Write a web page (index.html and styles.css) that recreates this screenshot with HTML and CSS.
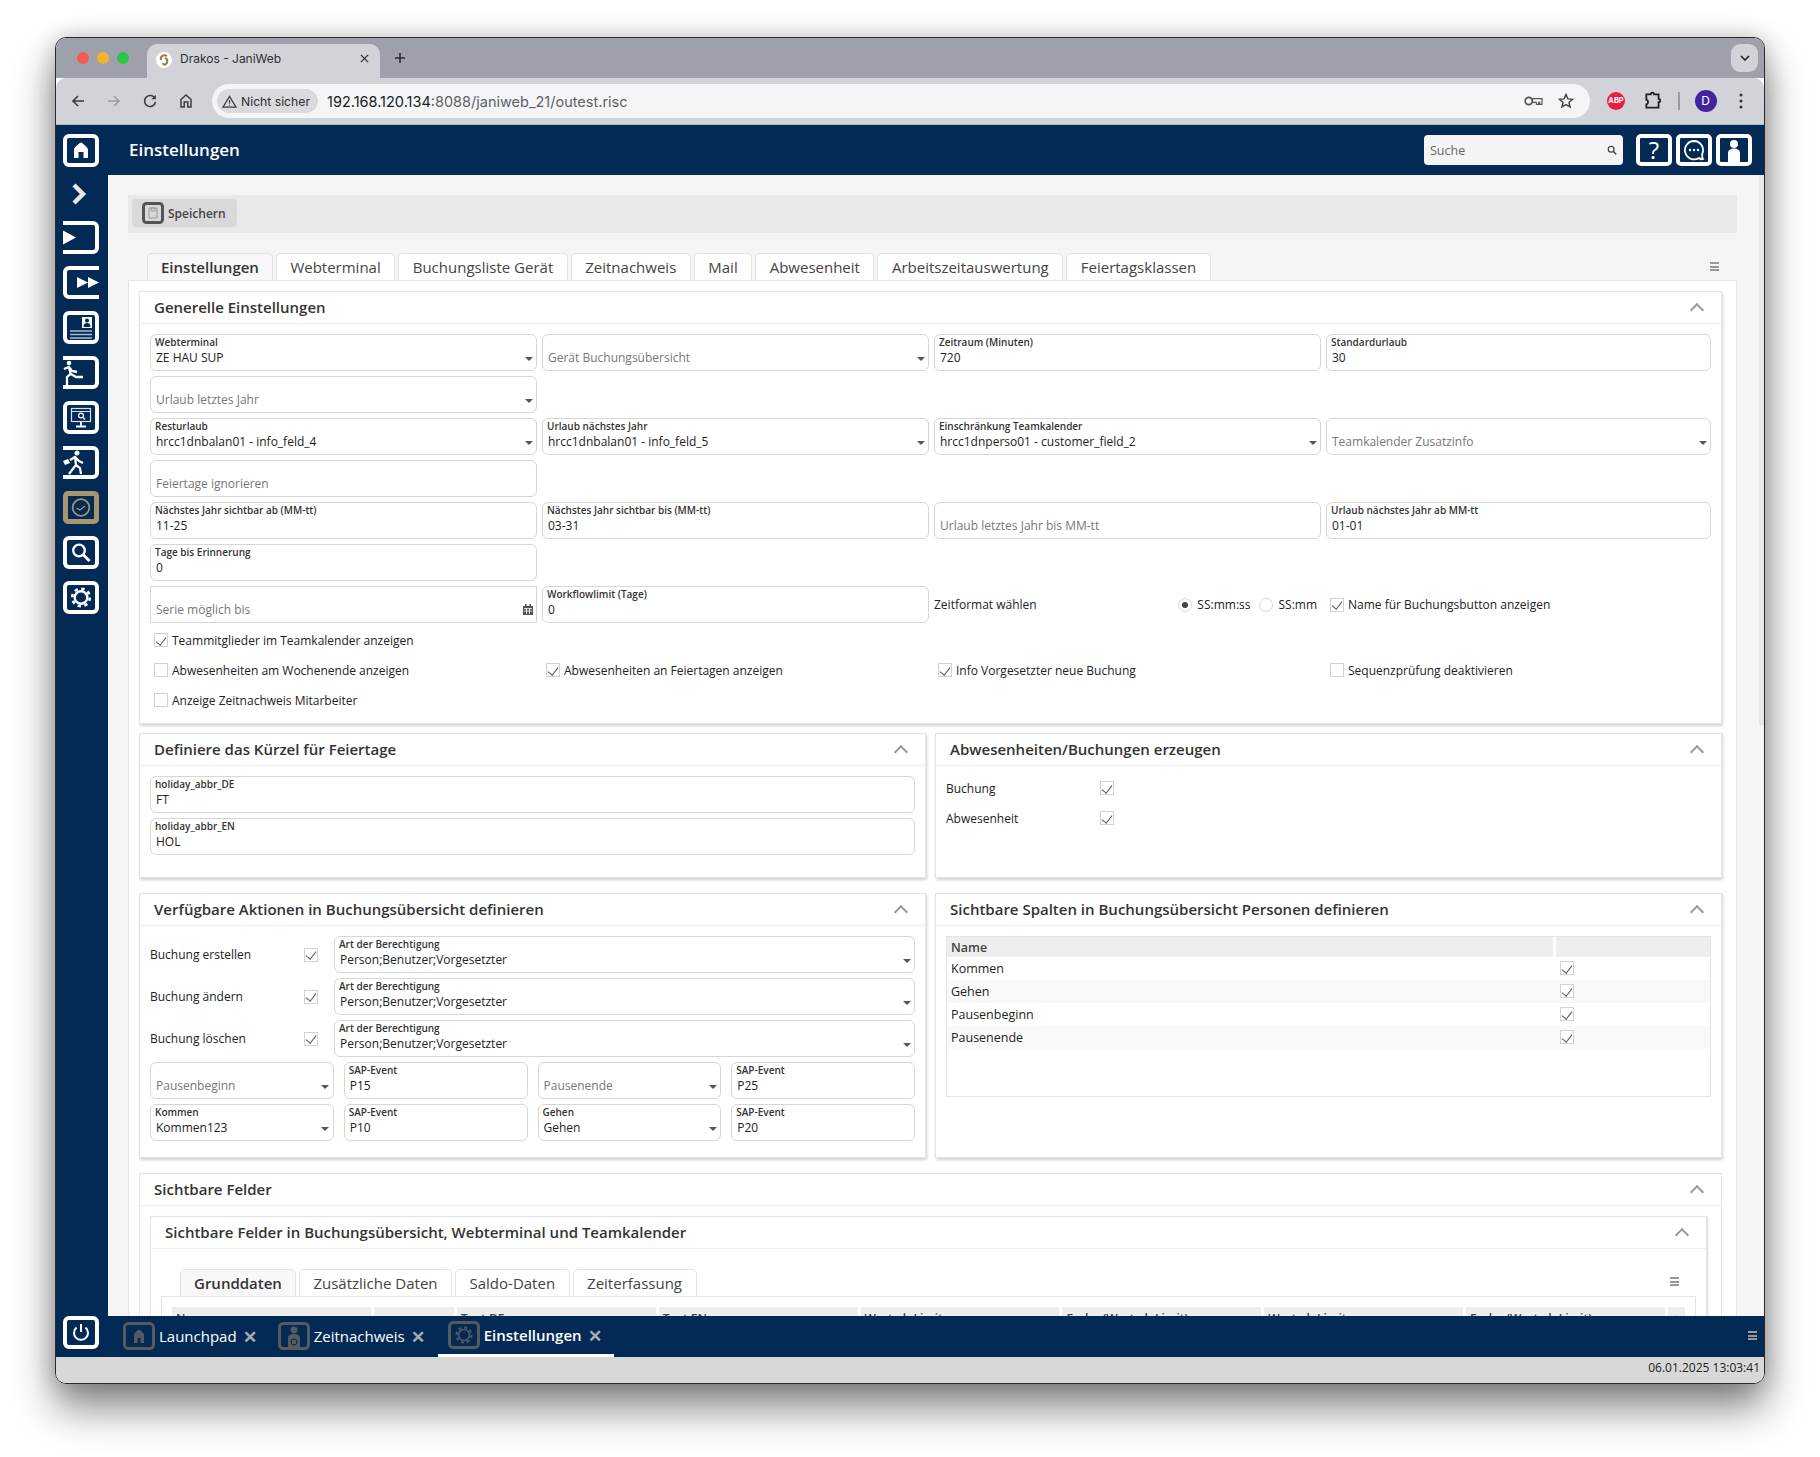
FILE: index.html
```html
<!DOCTYPE html>
<html lang="de">

<head>
  <meta charset="UTF-8">
  <title>Drakos - JaniWeb</title>
  <link rel="stylesheet" href="styles.css">
</head>

<body>
  <div class="window">

    <!-- browser chrome -->
    <div class="tabstrip">
      <span class="light red"></span><span class="light yellow"></span><span class="light green"></span>
      <div class="browser-tab">
        <svg class="favicon" viewBox="0 0 16 16"><circle cx="8" cy="8" r="8" fill="#fff"/><path d="M11 4C7 2 4 5 5 8M9 6c3 1 3 4 1 6-1 1-3 1-3-1" fill="none" stroke="#9a7a4c" stroke-width="2"/></svg>
        <span class="browser-tab-title">Drakos - JaniWeb</span>
        <svg class="browser-tab-close" viewBox="0 0 10 10"><path d="M1 1l8 8M9 1l-8 8" stroke="#333" stroke-width="1.4"/></svg>
      </div>
      <svg class="new-tab" viewBox="0 0 12 12"><path d="M6 1v10M1 6h10" stroke="#2b2b2b" stroke-width="1.6"/></svg>
      <div class="tab-dropdown"><svg viewBox="0 0 10 6"><path d="M1 1l4 4 4-4" fill="none" stroke="#222" stroke-width="1.6"/></svg></div>
    </div>

    <div class="toolbar">
      <span class="nav-btn"><svg viewBox="0 0 16 16"><path d="M14 8H3M8 3L3 8l5 5" fill="none" stroke="#3b3d42" stroke-width="1.6"/></svg></span>
      <span class="nav-btn"><svg viewBox="0 0 16 16"><path d="M2 8h11M8 3l5 5-5 5" fill="none" stroke="#9a9ca3" stroke-width="1.6"/></svg></span>
      <span class="nav-btn"><svg viewBox="0 0 16 16"><path d="M13 5.500A5.500 5.500 0 1 0 13.500 9" fill="none" stroke="#3b3d42" stroke-width="1.6"/><path d="M13.800 1.800v4.400H9.400z" fill="#3b3d42"/></svg></span>
      <span class="nav-btn"><svg viewBox="0 0 16 16"><path d="M3 14V6.500L8 2l5 4.500V14h-3.200V9H6.200v5z" fill="none" stroke="#3b3d42" stroke-width="1.500"/></svg></span>
      <div class="url-pill">
        <span class="insecure">
          <svg viewBox="0 0 16 14"><path d="M8 1.500L15 13H1z" fill="none" stroke="#3b3d42" stroke-width="1.300"/><path d="M8 5.500v4M8 10.500v1.200" stroke="#3b3d42" stroke-width="1.200"/></svg>
          Nicht sicher
        </span>
        <span class="url"><span class="url-host">192.168.120.134</span>:8088/janiweb_21/outest.risc</span>
        <svg class="key-icon" viewBox="0 0 20 12"><circle cx="5" cy="6" r="3.800" fill="none" stroke="#55575c" stroke-width="1.800"/><path d="M9 3.500h10v6h-2.500V7.500h-1v2h-2.500v-2H9z" fill="none" stroke="#55575c" stroke-width="1.200"/></svg>
        <svg class="star-icon" viewBox="0 0 16 16"><path d="M8 1.500l1.900 4.400 4.700.4-3.600 3.100 1.100 4.600L8 11.600 3.900 14l1.100-4.600-3.600-3.100 4.700-.4z" fill="none" stroke="#46484d" stroke-width="1.500"/></svg>
      </div>
      <span class="ext-btn"><span class="abp">ABP</span></span>
      <span class="ext-btn"><svg class="puzzle" viewBox="0 0 18 18"><path d="M3 3h4c0-2 3-2 3 0h4v4c2 0 2 3 0 3v5H3v-3c2 0 2-4 0-4z" fill="none" stroke="#202124" stroke-width="1.600"/></svg></span>
      <span class="toolbar-divider"></span>
      <span class="avatar">D</span>
      <span class="ext-btn"><svg viewBox="0 0 4 16"><circle cx="2" cy="2" r="1.500" fill="#333"/><circle cx="2" cy="8" r="1.500" fill="#333"/><circle cx="2" cy="14" r="1.500" fill="#333"/></svg></span>
    </div>

    <div class="app">
      <!-- left icon bar -->
      <nav class="sidebar">
        <svg class="side-btn" viewBox="0 0 36 33"><rect x="2" y="2" width="32" height="29" rx="4" fill="none" stroke="#fff" stroke-width="4"/><path d="M18 8.500c1 0 7 5 7 7V24h-4.500v-6h-5v6H11v-8.500c0-2 6-7 7-7z" fill="#fff"/></svg>
        <svg class="side-chevron" viewBox="0 0 16 30"><path d="M3 6l9 9-9 9" fill="none" stroke="#e6e6e6" stroke-width="4.500"/></svg>
        <svg class="side-btn" viewBox="0 0 36 33"><path d="M0 2h30a4 4 0 0 1 4 4v21a4 4 0 0 1-4 4H0" fill="none" stroke="#fff" stroke-width="4"/><path d="M0 9.500l13 7-13 7z" fill="#fff"/></svg>
        <svg class="side-btn" viewBox="0 0 36 33"><path d="M36 2H6a4 4 0 0 0-4 4v21a4 4 0 0 0 4 4h30" fill="none" stroke="#fff" stroke-width="4"/><path d="M14 11l11 5.500L14 22zM25 11l11 5.500L25 22z" fill="#fff"/></svg>
        <svg class="side-btn" viewBox="0 0 36 33"><rect x="2" y="2" width="32" height="29" rx="4" fill="none" stroke="#fff" stroke-width="4"/><path d="M19 6h10v11H19z" fill="#fff"/><circle cx="24" cy="9.500" r="2" fill="#032a54"/><path d="M20.500 16c0-3 1.500-4 3.500-4s3.500 1 3.500 4z" fill="#032a54"/><path d="M7 20h22M7 23.500h22M7 27h22" stroke="#a9bccd" stroke-width="1.300"/></svg>
        <svg class="side-btn" viewBox="0 0 36 33"><path d="M0 2h30a4 4 0 0 1 4 4v21a4 4 0 0 1-4 4H0" fill="none" stroke="#fff" stroke-width="4"/><circle cx="6" cy="7" r="2.300" fill="#fff"/><path d="M1 13l5-2 3 4 5 1M6 11l1.500 7-3.500 3v9M8 18l5 3h7" fill="none" stroke="#fff" stroke-width="2.300"/></svg>
        <svg class="side-btn" viewBox="0 0 36 33"><rect x="2" y="2" width="32" height="29" rx="4" fill="none" stroke="#fff" stroke-width="4"/><rect x="8.500" y="7.500" width="19" height="13" fill="none" stroke="#d8e0e8" stroke-width="1.200"/><path d="M8 10.500h20" stroke="#d8e0e8"/><circle cx="18" cy="14.500" r="2.400" fill="none" stroke="#fff" stroke-width="1.200"/><path d="M20 16.500l2 2" stroke="#fff" stroke-width="1.200"/><path d="M18 21v4M13 25.500h10" stroke="#fff" stroke-width="1.800"/></svg>
        <svg class="side-btn" viewBox="0 0 36 33"><path d="M0 2h30a4 4 0 0 1 4 4v21a4 4 0 0 1-4 4H0" fill="none" stroke="#fff" stroke-width="4"/><circle cx="14" cy="7" r="2.500" fill="#fff"/><path d="M7 14l5-3 4 4 4 2M12 11l1 8-4 5-3 4M13 19l4 3 1 6" fill="none" stroke="#fff" stroke-width="2.200"/><path d="M0 15l5-2 2 4-5 2z" fill="#fff"/></svg>
        <svg class="side-btn" viewBox="0 0 36 33"><rect x="0" y="0" width="36" height="33" rx="5" fill="#a6966f"/><rect x="5" y="5" width="26" height="23" fill="#032a54"/><circle cx="18" cy="16.500" r="8.300" fill="none" stroke="#a6966f" stroke-width="1.800"/><path d="M13.500 17l3.500 2 5-4" fill="none" stroke="#a6966f" stroke-width="1.200"/></svg>
        <svg class="side-btn" viewBox="0 0 36 33"><rect x="2" y="2" width="32" height="29" rx="4" fill="none" stroke="#fff" stroke-width="4"/><circle cx="16" cy="14.500" r="5.800" fill="none" stroke="#fff" stroke-width="2.300"/><path d="M20.500 19l6 6" stroke="#fff" stroke-width="2.800"/></svg>
        <svg class="side-btn" viewBox="0 0 36 33"><rect x="2" y="2" width="32" height="29" rx="4" fill="none" stroke="#fff" stroke-width="4"/><circle cx="18" cy="16.500" r="6.300" fill="none" stroke="#fff" stroke-width="2.400"/><circle cx="18" cy="16.500" r="8.800" fill="none" stroke="#fff" stroke-width="2.600" stroke-dasharray="3.400 3.510"/></svg>
      </nav>

      <div class="app-main">
        <header class="app-header">
          <span class="app-title">Einstellungen</span>
          <div class="search">
            <span>Suche</span>
            <svg viewBox="0 0 12 12"><circle cx="5" cy="5" r="3.500" fill="none" stroke="#444" stroke-width="1.500"/><path d="M7.500 7.500L11 11" stroke="#444" stroke-width="1.800"/></svg>
          </div>
          <span class="head-btn">?</span>
          <span class="head-btn"><svg viewBox="0 0 28 24"><path d="M14 3a9.200 9.200 0 1 0 5 17c1 1 3 1.500 4 1-1-1-1-3-.8-5A9.200 9.200 0 0 0 14 3z" fill="none" stroke="#fff" stroke-width="1.800"/><circle cx="10" cy="12" r="1.200" fill="#fff"/><circle cx="14" cy="12" r="1.200" fill="#fff"/><circle cx="18" cy="12" r="1.200" fill="#fff"/></svg></span>
          <span class="head-btn"><svg viewBox="0 0 28 24"><circle cx="14" cy="6" r="4" fill="#fff"/><path d="M8 24v-9c0-3 3-4.500 6-4.500s6 1.500 6 4.500v9z" fill="#fff"/></svg></span>
        </header>

        <main class="content">
          <span class="scroll-thumb"></span>
          <div class="action-bar">
            <button class="save-btn">
              <svg viewBox="0 0 22 22"><rect x="1.500" y="1.500" width="19" height="19" rx="3" fill="#d9d9d9" stroke="#555" stroke-width="3"/><path d="M7 6h8v10H7z" fill="none" stroke="#999"/><path d="M9 6h4v3H9z" fill="none" stroke="#999"/></svg>
              Speichern
            </button>
          </div>

          <div class="tabs">
            <span class="tab active">Einstellungen</span>
            <span class="tab">Webterminal</span>
            <span class="tab">Buchungsliste Gerät</span>
            <span class="tab">Zeitnachweis</span>
            <span class="tab">Mail</span>
            <span class="tab">Abwesenheit</span>
            <span class="tab">Arbeitszeitauswertung</span>
            <span class="tab">Feiertagsklassen</span>
            <span class="burger"></span>
          </div>

          <div class="tab-panel">
            <section class="card">
              <div class="card-head"><h2>Generelle Einstellungen</h2><span class="chev"></span></div>
              <div class="card-body general">
                <div class="fields">
                  <div class="field select"><label>Webterminal</label><span>ZE HAU SUP</span></div>
                  <div class="field select empty"><span>Gerät Buchungsübersicht</span></div>
                  <div class="field"><label>Zeitraum (Minuten)</label><span>720</span></div>
                  <div class="field"><label>Standardurlaub</label><span>30</span></div>

                  <div class="field select empty newrow"><span>Urlaub letztes Jahr</span></div>

                  <div class="field select newrow"><label>Resturlaub</label><span>hrcc1dnbalan01 - info_feld_4</span></div>
                  <div class="field select"><label>Urlaub nächstes Jahr</label><span>hrcc1dnbalan01 - info_feld_5</span></div>
                  <div class="field select"><label>Einschränkung Teamkalender</label><span>hrcc1dnperso01 - customer_field_2</span></div>
                  <div class="field select empty"><span>Teamkalender Zusatzinfo</span></div>

                  <div class="field empty newrow"><span>Feiertage ignorieren</span></div>

                  <div class="field newrow"><label>Nächstes Jahr sichtbar ab (MM-tt)</label><span>11-25</span></div>
                  <div class="field"><label>Nächstes Jahr sichtbar bis (MM-tt)</label><span>03-31</span></div>
                  <div class="field empty"><span>Urlaub letztes Jahr bis MM-tt</span></div>
                  <div class="field"><label>Urlaub nächstes Jahr ab MM-tt</label><span>01-01</span></div>

                  <div class="field newrow"><label>Tage bis Erinnerung</label><span>0</span></div>

                  <div class="field empty square newrow"><span>Serie möglich bis</span>
                    <svg class="cal-icon" viewBox="0 0 10 11"><path d="M0 2h10v9H0zM2 0h1.500v2H2zM6.500 0H8v2H6.500z" fill="#555"/><path d="M1 4.500h8M1 7h8M3.500 4v6M6.500 4v6" stroke="#fff" stroke-width=".8"/></svg>
                  </div>
                  <div class="field"><label>Workflowlimit (Tage)</label><span>0</span></div>
                  <div class="time-format">
                    <span>Zeitformat wählen</span>
                    <span class="radios">
                      <span class="radio on"></span><span>SS:mm:ss</span>
                      <span class="radio"></span><span>SS:mm</span>
                    </span>
                  </div>
                  <div class="check-line"><span class="cb on"></span>Name für Buchungsbutton anzeigen</div>
                </div>
                <div class="checks">
                  <div class="check-line newrow"><span class="cb on"></span>Teammitglieder im Teamkalender anzeigen</div>
                  <div class="check-line newrow"><span class="cb"></span>Abwesenheiten am Wochenende anzeigen</div>
                  <div class="check-line"><span class="cb on"></span>Abwesenheiten an Feiertagen anzeigen</div>
                  <div class="check-line"><span class="cb on"></span>Info Vorgesetzter neue Buchung</div>
                  <div class="check-line"><span class="cb"></span>Sequenzprüfung deaktivieren</div>
                  <div class="check-line newrow"><span class="cb"></span>Anzeige Zeitnachweis Mitarbeiter</div>
                </div>
              </div>
            </section>

            <div class="card-row short">
              <section class="card">
                <div class="card-head"><h2>Definiere das Kürzel für Feiertage</h2><span class="chev"></span></div>
                <div class="card-body stack">
                  <div class="field"><label>holiday_abbr_DE</label><span>FT</span></div>
                  <div class="field"><label>holiday_abbr_EN</label><span>HOL</span></div>
                </div>
              </section>
              <section class="card">
                <div class="card-head"><h2>Abwesenheiten/Buchungen erzeugen</h2><span class="chev"></span></div>
                <div class="card-body toggles">
                  <div class="toggle-row"><span>Buchung</span><span class="cb on"></span></div>
                  <div class="toggle-row"><span>Abwesenheit</span><span class="cb on"></span></div>
                </div>
              </section>
            </div>

            <div class="card-row tall">
              <section class="card">
                <div class="card-head"><h2>Verfügbare Aktionen in Buchungsübersicht definieren</h2><span class="chev"></span></div>
                <div class="card-body stack">
                  <div class="action-row"><span>Buchung erstellen</span><span class="cb on"></span>
                    <div class="field select"><label>Art der Berechtigung</label><span>Person;Benutzer;Vorgesetzter</span></div></div>
                  <div class="action-row"><span>Buchung ändern</span><span class="cb on"></span>
                    <div class="field select"><label>Art der Berechtigung</label><span>Person;Benutzer;Vorgesetzter</span></div></div>
                  <div class="action-row"><span>Buchung löschen</span><span class="cb on"></span>
                    <div class="field select"><label>Art der Berechtigung</label><span>Person;Benutzer;Vorgesetzter</span></div></div>
                  <div class="event-row">
                    <div class="field select empty"><span>Pausenbeginn</span></div>
                    <div class="field"><label>SAP-Event</label><span>P15</span></div>
                    <div class="field select empty"><span>Pausenende</span></div>
                    <div class="field"><label>SAP-Event</label><span>P25</span></div>
                  </div>
                  <div class="event-row">
                    <div class="field select"><label>Kommen</label><span>Kommen123</span></div>
                    <div class="field"><label>SAP-Event</label><span>P10</span></div>
                    <div class="field select"><label>Gehen</label><span>Gehen</span></div>
                    <div class="field"><label>SAP-Event</label><span>P20</span></div>
                  </div>
                </div>
              </section>
              <section class="card">
                <div class="card-head"><h2>Sichtbare Spalten in Buchungsübersicht Personen definieren</h2><span class="chev"></span></div>
                <div class="card-body">
                  <div class="grid-box">
                    <table class="col-table">
                      <thead><tr><th>Name</th><th></th></tr></thead>
                      <tbody>
                        <tr><td>Kommen</td><td><span class="cb on"></span></td></tr>
                        <tr><td>Gehen</td><td><span class="cb on"></span></td></tr>
                        <tr><td>Pausenbeginn</td><td><span class="cb on"></span></td></tr>
                        <tr><td>Pausenende</td><td><span class="cb on"></span></td></tr>
                      </tbody>
                    </table>
                  </div>
                </div>
              </section>
            </div>

            <section class="card outer">
              <div class="card-head"><h2>Sichtbare Felder</h2><span class="chev"></span></div>
              <div class="card-body">
                <section class="card inner">
                  <div class="card-head"><h2>Sichtbare Felder in Buchungsübersicht, Webterminal und Teamkalender</h2><span class="chev"></span></div>
                  <div class="card-body">
                    <div class="tabs sub">
                      <span class="tab active">Grunddaten</span>
                      <span class="tab">Zusätzliche Daten</span>
                      <span class="tab">Saldo-Daten</span>
                      <span class="tab">Zeiterfassung</span>
                      <span class="burger"></span>
                    </div>
                    <div class="tab-panel sub">
                      <div class="head-cells">
                        <span class="w199">Name</span>
                        <span class="w80"></span>
                        <span class="w199">Text DE</span>
                        <span class="w199">Text EN</span>
                        <span class="w199">Wert ab Limit</span>
                        <span class="w199">Farbe (Wert ab Limit)</span>
                        <span class="w199">Wert ab Limit</span>
                        <span class="w199">Farbe (Wert ab Limit)</span>
                        <span class="w17">+</span>
                      </div>
                    </div>
                  </div>
                </section>
              </div>
            </section>
          </div>
        </main>
      </div>
    </div>

    <!-- open screens bar -->
    <div class="taskbar">
      <svg class="power" viewBox="0 0 36 33"><rect x="2" y="2" width="32" height="29" rx="4" fill="none" stroke="#fff" stroke-width="4"/><path d="M13.500 11.500a7 7 0 1 0 9 0M18 8v8" fill="none" stroke="#fff" stroke-width="2"/></svg>
      <div class="task">
        <svg class="task-icon" viewBox="0 0 32 28"><rect x="1.500" y="1.500" width="29" height="25" rx="4" fill="#032a54" stroke="#555a60" stroke-width="3"/><path d="M16 7.500c1 0 5 4 5 5.500v8h-3.500v-5h-3v5H11v-8c0-1.500 4-5.500 5-5.500z" fill="#555a60"/></svg>
        <span>Launchpad</span><span class="task-x">✕</span>
      </div>
      <div class="task">
        <svg class="task-icon" viewBox="0 0 32 28"><rect x="1.500" y="1.500" width="29" height="25" rx="4" fill="#032a54" stroke="#555a60" stroke-width="3"/><circle cx="16" cy="8" r="3.500" fill="#555a60"/><path d="M10 26V16c0-3 3-4 6-4s6 1 6 4v10z" fill="#555a60"/><circle cx="16" cy="20" r="3" fill="none" stroke="#032a54"/></svg>
        <span>Zeitnachweis</span><span class="task-x">✕</span>
      </div>
      <div class="task current">
        <svg class="task-icon" viewBox="0 0 32 28"><rect x="1.500" y="1.500" width="29" height="25" rx="4" fill="#032a54" stroke="#555a60" stroke-width="3"/><circle cx="16" cy="14" r="5.500" fill="none" stroke="#555a60" stroke-width="1.500"/><circle cx="16" cy="14" r="7.500" fill="none" stroke="#555a60" stroke-width="2" stroke-dasharray="3 2.890"/></svg>
        <span>Einstellungen</span><span class="task-x">✕</span>
      </div>
      <span class="burger light-burger"></span>
    </div>

    <div class="statusbar">06.01.2025 13:03:41</div>
  </div>
</body>

</html>
```

FILE: styles.css
```css
* {
  box-sizing: border-box;
}

html,
body {
  margin: 0;
  height: 1457px;
  overflow: hidden;
  background: #fff;
}

body {
  font-family: "Open Sans", sans-serif;
  font-size: 13px;
  color: #222;
  padding: 37px 0 0 55px;
}

.window {
  width: 1710px;
  height: 1347px;
  display: flex;
  flex-direction: column;
  border: 1px solid #2a2a2a;
  border-radius: 11px;
  overflow: hidden;
  box-shadow: 0 24px 42px rgba(0, 0, 0, .48), 0 0 24px rgba(0, 0, 0, .2);
}

/* browser chrome */
.tabstrip {
  height: 40px;
  flex: none;
  background: #9ea1ac;
  display: flex;
  align-items: flex-end;
  padding-left: 21px;
  font-family: Inter, sans-serif;
}

.light {
  width: 12px;
  height: 12px;
  border-radius: 50%;
  margin: 0 8px 14px 0;
}

.red { background: #f25c54; }
.yellow { background: #f6b12f; }
.green { background: #2cc544; }

.browser-tab {
  width: 233px;
  height: 34px;
  margin-left: 10px;
  background: #d1d3d9;
  border-radius: 10px 10px 0 0;
  display: flex;
  align-items: center;
  padding: 0 11px 6px 9px;
}

.favicon {
  width: 16px;
  height: 16px;
  margin-top: 3px;
}

.browser-tab-title {
  margin-left: 8px;
  font-size: 12px;
  color: #2e2f33;
  flex: 1;
}

.browser-tab-close {
  width: 9px;
  height: 9px;
}

.new-tab {
  width: 12px;
  height: 12px;
  margin: 0 0 14px 14px;
}

.tab-dropdown {
  margin: 0 6px 6px auto;
  width: 27px;
  height: 28px;
  border-radius: 9px;
  background: #d1d3d9;
  display: flex;
  align-items: center;
  justify-content: center;
}

.tab-dropdown svg {
  width: 10px;
  height: 6px;
}

.toolbar {
  height: 47px;
  flex: none;
  background: #d1d3d9;
  border-radius: 10px 10px 0 0;
  margin-top: 0;
  border-bottom: 1px solid #b4b6bb;
  display: flex;
  align-items: center;
  padding-left: 4px;
  font-family: Inter, sans-serif;
}

.nav-btn {
  width: 36px;
  display: flex;
  justify-content: center;
}

.nav-btn svg {
  width: 16px;
  height: 16px;
}

.url-pill {
  width: 1378px;
  height: 34px;
  margin-left: 8px;
  border-radius: 17px;
  background: #f4f5f7;
  display: flex;
  align-items: center;
  padding: 0 16px 0 5px;
}

.insecure {
  width: 101px;
  height: 24px;
  border-radius: 12px;
  background: #d8dade;
  display: flex;
  align-items: center;
  gap: 4px;
  padding-left: 5px;
  font-size: 12.200px;
  color: #2e2f33;
}

.insecure svg {
  width: 15px;
  height: 13px;
}

.url {
  margin-left: 9px;
  font-size: 14.500px;
  color: #5f6166;
  flex: 1;
}

.url-host {
  color: #202124;
}

.key-icon {
  width: 19px;
  height: 12px;
  margin-right: 15px;
}

.star-icon {
  width: 16px;
  height: 16px;
}

.ext-btn {
  width: 36px;
  display: flex;
  justify-content: center;
  align-items: center;
  margin-left: 0;
}

.url-pill + .ext-btn {
  margin-left: 8px;
}

.ext-btn svg {
  height: 16px;
  width: 18px;
}

.ext-btn svg.puzzle {
  width: 20px;
  height: 20px;
  margin-left: 2px;
}

.abp {
  width: 18px;
  height: 18px;
  border-radius: 50%;
  background: #ea1c44;
  color: #fff;
  font-size: 7.500px;
  font-weight: 700;
  line-height: 18px;
  text-align: center;
}

.toolbar-divider {
  width: 1.500px;
  height: 18px;
  background: #9a9ca3;
  margin: 0 15px 0 8px;
}

.avatar {
  width: 22px;
  height: 22px;
  border-radius: 50%;
  background: #44249a;
  color: #fff;
  font-size: 12px;
  line-height: 22px;
  text-align: center;
  margin-right: 6px;
}

/* application frame */
.app {
  flex: 1;
  min-height: 0;
  display: flex;
  background: #032a54;
}

.sidebar {
  width: 52px;
  flex: none;
  display: flex;
  flex-direction: column;
  gap: 12px;
  padding: 9px 0 0 7px;
}

.side-btn {
  width: 36px;
  height: 33px;
  flex: none;
}

.side-chevron {
  width: 16px;
  height: 30px;
  margin-left: 8px;
  flex: none;
}

.app-main {
  flex: 1;
  min-width: 0;
  display: flex;
  flex-direction: column;
}

.app-header {
  height: 50px;
  flex: none;
  display: flex;
  align-items: center;
  padding: 0 12px 0 21px;
  gap: 4px;
}

.app-title {
  font-size: 17px;
  font-weight: 600;
  color: #fff;
  margin: 0 auto 2px 0;
}

.search {
  width: 199px;
  height: 30px;
  margin-right: 9px;
  background: #f4f4f4;
  border-radius: 4px;
  display: flex;
  align-items: center;
  justify-content: space-between;
  padding: 0 6px;
  font-size: 12.500px;
  color: #666;
}

.search svg {
  width: 10px;
  height: 10px;
}

.head-btn {
  width: 36px;
  height: 32px;
  border: 4px solid #fff;
  border-radius: 5px;
  color: #fff;
  font-size: 24px;
  line-height: 24px;
  text-align: center;
}

.head-btn svg {
  display: block;
  width: 28px;
  height: 24px;
}

.content {
  flex: 1;
  min-height: 0;
  position: relative;
  overflow: hidden;
  background: #f5f5f5;
  padding: 20px 27px 0 20px;
}

.scroll-thumb {
  position: absolute;
  top: 0;
  right: 0;
  width: 5px;
  height: 550px;
  background: #e8e8e8;
}

.action-bar {
  height: 38px;
  background: #e9e9e9;
  padding: 4px;
}

.save-btn {
  width: 105px;
  height: 28px;
  border: 0;
  border-radius: 4px;
  background: #d9d9d9;
  display: flex;
  align-items: center;
  gap: 4px;
  padding: 0 0 0 10px;
  font-family: inherit;
  font-size: 12px;
  font-weight: 600;
  color: #444;
}

.save-btn svg {
  width: 22px;
  height: 22px;
}

/* tabs */
.tabs {
  height: 27px;
  margin-top: 20px;
  padding-left: 19px;
  display: flex;
  gap: 3px;
  position: relative;
}

.tab {
  height: 27px;
  padding: 0 13.500px;
  line-height: 27px;
  font-size: 15px;
  color: #444;
  background: #fff;
  border: 1px solid #e3e3e3;
  border-bottom: 0;
  border-radius: 5px 5px 0 0;
}

.tab.active {
  padding: 0 13px;
  font-weight: 600;
  color: #333;
  background: #f8f8f8;
}

.burger {
  position: absolute;
  right: 18px;
  top: 9px;
  width: 9px;
  height: 9px;
  border-top: 2px solid #999;
  border-bottom: 2px solid #999;
}

.burger::before {
  content: "";
  display: block;
  height: 2px;
  margin-top: 1.500px;
  background: #999;
}

.tab-panel {
  background: #fff;
  border: 1px solid #e5e5e5;
  padding: 10px 14px 20px 10px;
}

/* cards */
.card {
  background: #fff;
  border: 1px solid #e4e4e4;
  box-shadow: 1px 2px 3px rgba(0, 0, 0, .18);
}

.card-head {
  height: 32px;
  border-bottom: 1px solid #eee;
  display: flex;
  align-items: center;
  justify-content: space-between;
  padding: 0 19px 0 14px;
}

.card-head h2 {
  margin: 0 0 2px;
  font-size: 15px;
  font-weight: 600;
  color: #333;
}

.chev {
  width: 10px;
  height: 10px;
  margin-top: 5px;
  border-top: 2.500px solid #999;
  border-left: 2.500px solid #999;
  transform: rotate(45deg);
}

.card-body {
  padding: 10px;
}

.card-body.general {
  padding-bottom: 8px;
}

.card-body.toggles {
  padding-top: 7px;
}

.card-row {
  display: grid;
  grid-template-columns: 787px 787px;
  gap: 9px;
  margin-top: 9px;
}

.card-row.short {
  height: 145px;
}

.card-row.tall {
  height: 265px;
  margin-top: 15px;
}

.outer {
  margin-top: 15px;
  box-shadow: none;
}

.inner {
  box-shadow: 1px 1px 2px rgba(0, 0, 0, .15);
  margin-right: 4px;
}

/* form fields */
.fields {
  display: grid;
  grid-template-columns: 387px 387px 387px 1fr;
  grid-auto-rows: 37px;
  gap: 5px;
}

.newrow {
  grid-column: 1;
}

.field {
  position: relative;
  height: 37px;
  border: 1px solid #d6d6d6;
  border-radius: 6px;
  padding: 0 4px 4px 4px;
  display: flex;
  flex-direction: column;
  justify-content: flex-end;
  font-size: 12px;
  color: #222;
  background: #fff;
}

.field.square {
  border-radius: 0;
}

.field label {
  font-size: 10px;
  font-weight: 600;
  line-height: 13px;
  color: #333;
}

.field span {
  line-height: 17px;
  padding-left: 1px;
}

.field.empty span {
  color: #777;
}

.field.select::after {
  content: "";
  position: absolute;
  right: 3.500px;
  bottom: 9px;
  border-top: 4px solid #555;
  border-left: 4px solid transparent;
  border-right: 4px solid transparent;
}

.cal-icon {
  position: absolute;
  right: 3px;
  bottom: 7px;
  width: 10px;
  height: 11px;
}

.time-format {
  display: flex;
  align-items: center;
  justify-content: space-between;
  font-size: 12px;
  padding-right: 4px;
}

.radios {
  display: flex;
  align-items: center;
  gap: 5px;
}

.radio {
  width: 14px;
  height: 14px;
  border: 1px solid #d6d6d6;
  border-radius: 50%;
  position: relative;
}

.radio.on::after {
  content: "";
  position: absolute;
  left: 3px;
  top: 3px;
  width: 6px;
  height: 6px;
  border-radius: 50%;
  background: #444;
}

.radio + span + .radio {
  margin-left: 4px;
}

.check-line {
  display: flex;
  align-items: center;
  gap: 4px;
  padding-left: 4px;
  font-size: 12px;
}

.cb {
  width: 14px;
  height: 14px;
  flex: none;
  display: inline-block;
  position: relative;
  border: 1px solid #d2d2d2;
  background: #fff;
}

.cb.on::after {
  content: "";
  position: absolute;
  left: 3px;
  top: .5px;
  width: 5px;
  height: 9px;
  border-right: 1.600px solid #555;
  border-bottom: 1.600px solid #555;
  transform: rotate(38deg);
}

.checks {
  display: grid;
  grid-template-columns: 387px 387px 387px 1fr;
  grid-auto-rows: 30px;
  column-gap: 5px;
  margin-top: 2px;
}

.stack {
  display: flex;
  flex-direction: column;
  gap: 5px;
}

.toggle-row {
  display: flex;
  align-items: center;
  height: 30px;
  font-size: 12px;
}

.toggle-row span:first-child {
  width: 154px;
}

.action-row {
  display: grid;
  grid-template-columns: 154px 30px 1fr;
  align-items: center;
  font-size: 12px;
}

.event-row {
  display: grid;
  grid-template-columns: repeat(4, 1fr);
  gap: 10px;
}

/* table of visible columns */
.grid-box {
  height: 161px;
  border: 1px solid #e5e5e5;
}

.col-table {
  width: 100%;
  border-collapse: collapse;
  font-size: 12.500px;
}

.col-table th {
  height: 20px;
  padding: 0 4px;
  background: #eee;
  color: #444;
  font-weight: 600;
  text-align: left;
}

.col-table th + th {
  width: 156px;
  border-left: 3px solid #fff;
}

.col-table td {
  height: 23px;
  padding: 0 4px;
}

.col-table td + td {
  padding: 0 0 0 6px;
}

.col-table td .cb {
  display: block;
  margin-top: -1px;
}

.col-table tbody tr:nth-child(even) {
  background: #f9f9f9;
}

/* nested tabs with the clipped table */
.tabs.sub {
  margin-top: 10px;
  padding-left: 19px;
}

.tabs.sub .burger {
  right: 17px;
  top: 8px;
}

.tab-panel.sub {
  border: 1px solid #e5e5e5;
  padding: 10px;
}

.head-cells {
  display: flex;
  gap: 3px;
}

.head-cells span {
  height: 24px;
  padding: 3px 4px 0;
  background: #eee;
  font-size: 12px;
  font-weight: 600;
  color: #444;
  white-space: nowrap;
  overflow: hidden;
}

.w199 { width: 199px; }
.w80 { width: 80px; }
.w17 { width: 17px; text-align: center; }

/* bottom bar */
.taskbar {
  height: 41px;
  flex: none;
  background: #032a54;
  display: flex;
  align-items: stretch;
  padding-left: 7px;
  position: relative;
}

.power {
  width: 36px;
  height: 33px;
  margin-right: 24px;
}

.task {
  display: flex;
  align-items: center;
  padding-bottom: 1px;
  margin-right: 21px;
  color: #fff;
  font-size: 15px;
}

.task-icon {
  width: 32px;
  height: 28px;
  margin-right: 4px;
}

.task-x {
  margin-left: 6px;
  color: #a8adb3;
  font-size: 17px;
  font-weight: 700;
}

.task.current {
  width: 176px;
  margin: 0 0 0 -8px;
  padding: 0 0 0 10px;
  border-bottom: 3px solid #fff;
  font-weight: 600;
}

.light-burger {
  right: 7px;
  top: 15px;
}

.statusbar {
  height: 26px;
  flex: none;
  background: #d8d8d8;
  text-align: right;
  padding-right: 4px;
  font-size: 12px;
  line-height: 22px;
  color: #222;
}
```
